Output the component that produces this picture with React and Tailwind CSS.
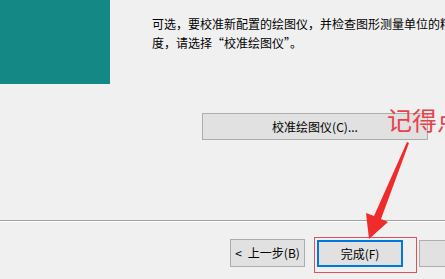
export default function App() {
  const font = { fontFamily: '"Noto Sans CJK SC", "Liberation Sans", sans-serif' };
  return (
    <div className="relative w-[445px] h-[279px] overflow-hidden bg-[#f0f0f0] text-black" style={font}>
      {/* header row */}
      <div className="flex">
        <div className="w-[110px] h-[84px] shrink-0 bg-[#138884]" />
        <div className="ml-[42px] pt-[14px] text-[12px] leading-[19px] whitespace-nowrap">
          <div>可选，要校准新配置的绘图仪，并检查图形测量单位的精</div>
          <div>度，请选择“校准绘图仪”。</div>
        </div>
      </div>

      {/* calibrate button */}
      <div className="mt-[29px] ml-[202px] w-[226px] h-[27px] border border-[#adadad] bg-[#e1e1e1] flex items-center justify-center text-[12px]">
        校准绘图仪(C)...
      </div>

      {/* separator */}
      <div className="mt-[80px] h-[2px] border-t border-[#a0a0a0] bg-white" />

      {/* wizard buttons */}
      <div className="mt-[17px] flex items-start text-[12px] whitespace-nowrap">
        <div className="shrink-0 ml-[230px] w-[75px] h-[28px] border border-[#adadad] bg-[#e1e1e1] flex items-center justify-center gap-[6px]">
          <span>&lt;</span><span>上一步(B)</span>
        </div>
        <div className="shrink-0 ml-[12px] mt-[1px] w-[86px] h-[27px] border-2 border-[#0078d7] bg-[#e1e1e1] flex items-center justify-center">
          完成(F)
        </div>
        <div className="shrink-0 ml-[16px] mt-[1px] w-[80px] h-[27px] border border-[#adadad] bg-[#e1e1e1]" />
      </div>

      {/* annotation overlay */}
      <div className="absolute left-[314px] top-[237px] w-[103px] h-[36px] border border-[#d9555c]" />
      <div className="absolute left-[387px] top-[104px] text-[25px] leading-[30px] text-[#e8434c] whitespace-nowrap">记得点</div>
      <svg className="absolute left-0 top-0" width="445" height="279">
        <polygon points="407,142 409,143 381,219 388,222 369,239 366,213 374,216" fill="#f02b2b" />
      </svg>
    </div>
  );
}
